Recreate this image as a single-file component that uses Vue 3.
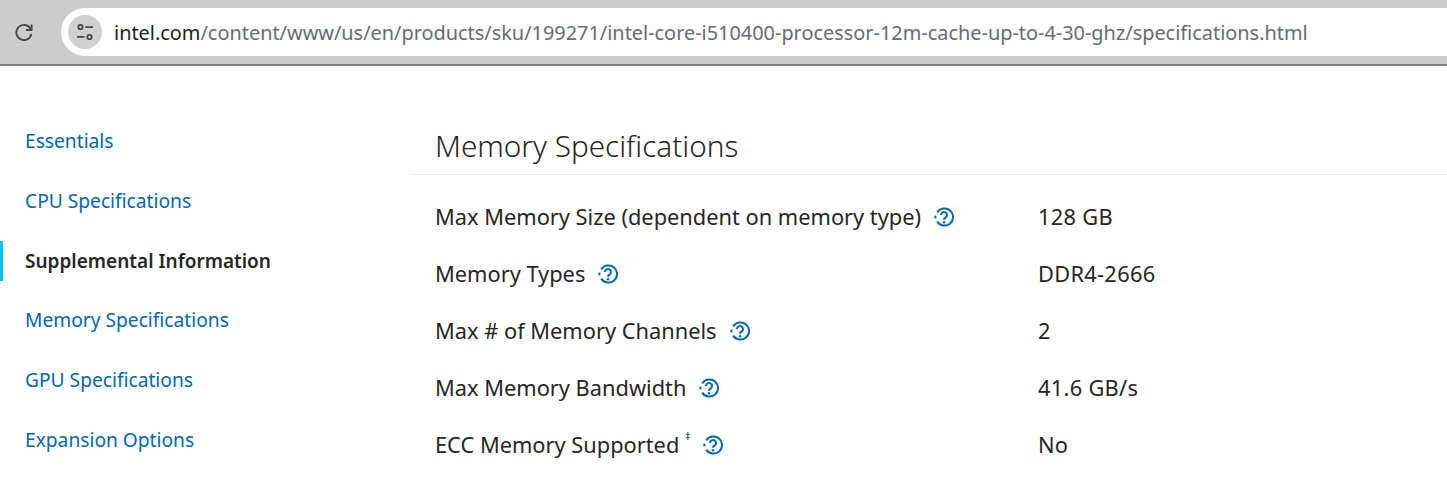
<template>
  <div class="page">
    <header class="toolbar">
      <svg class="reload" viewBox="0 0 20 20" width="20" height="20">
        <path d="M16.6 6.8A7.6 7.6 0 1 0 17.4 12" fill="none" stroke="#474747" stroke-width="1.9" />
        <path d="M17.6 2.4V8H12" fill="none" stroke="#474747" stroke-width="1.9" />
      </svg>
      <div class="omnibox">
        <span class="site-btn">
          <svg viewBox="0 0 20 20" width="20" height="20">
            <circle cx="5.5" cy="5" r="2.2" fill="none" stroke="#474747" stroke-width="1.8" />
            <path d="M10.5 5.2H18M2 14.8H9.5" stroke="#474747" stroke-width="1.8" fill="none" />
            <circle cx="14.5" cy="15" r="2.2" fill="none" stroke="#474747" stroke-width="1.8" />
          </svg>
        </span>
        <span class="url"><span class="host">intel.com</span>/content/www/us/en/products/sku/199271/intel-core-i510400-processor-12m-cache-up-to-4-30-ghz/specifications.html</span>
      </div>
    </header>

    <div class="content">
      <nav class="sidebar">
        <a
          v-for="item in navItems"
          :key="item"
          class="nav-item"
          :class="{ active: item === activeItem }"
        >{{ item }}</a>
      </nav>

      <main class="specs">
        <h2 class="specs-title">Memory Specifications</h2>
        <div class="spec-list">
          <div v-for="row in rows" :key="row.label" class="spec-row">
            <div class="spec-label">
              <span>{{ row.label }}</span>
              <sup v-if="row.note" class="note">‡</sup>
              <svg class="help" viewBox="0 0 20 20" width="20" height="20">
                <path d="M3.2 5.4A8.6 8.6 0 1 1 3.2 14.6" fill="none" stroke="#0068b5" stroke-width="2" />
                <path d="M1.4 8.6V11.4" stroke="#0068b5" stroke-width="2" fill="none" />
                <path d="M7 8A3 3 0 1 1 11.7 10.5C10.5 11.1 10 11.6 10 12.8" fill="none" stroke="#0068b5" stroke-width="2" />
                <circle cx="10" cy="15.2" r="1.25" fill="#0068b5" />
              </svg>
            </div>
            <div class="spec-value">{{ row.value }}</div>
          </div>
        </div>
      </main>
    </div>
  </div>
</template>

<script setup>
const activeItem = 'Supplemental Information'

const navItems = [
  'Essentials',
  'CPU Specifications',
  'Supplemental Information',
  'Memory Specifications',
  'GPU Specifications',
  'Expansion Options',
  'Package Specifications'
]

const rows = [
  { label: 'Max Memory Size (dependent on memory type)', value: '128 GB' },
  { label: 'Memory Types', value: 'DDR4-2666' },
  { label: 'Max # of Memory Channels', value: '2' },
  { label: 'Max Memory Bandwidth', value: '41.6 GB/s' },
  { label: 'ECC Memory Supported', value: 'No', note: true }
]
</script>

<style>
html, body {
  margin: 0;
  height: 100%;
  overflow: hidden;
  background: #fff;
}
</style>

<style scoped>
.page {
  height: 492px;
  overflow: hidden;
  font-family: 'Noto Sans', sans-serif;
  color: #262626;
}

.toolbar {
  display: flex;
  align-items: center;
  height: 64px;
  padding-left: 14px;
  background: #cccccc;
  border-bottom: 2px solid #808080;
}

.reload {
  margin-right: 27px;
}

.omnibox {
  flex: 1;
  display: flex;
  align-items: center;
  height: 48px;
  padding-left: 7px;
  background: #fdfdfd;
  border-radius: 24px 0 0 24px;
}

.site-btn {
  display: flex;
  align-items: center;
  justify-content: center;
  width: 34px;
  height: 34px;
  border-radius: 50%;
  background: #d0d0d0;
  margin-right: 12px;
}

.url {
  font-size: 19.9px;
  color: #666d75;
  white-space: nowrap;
}

.host {
  color: #1f1f1f;
}

.content {
  display: flex;
  align-items: flex-start;
}

.sidebar {
  width: 413px;
  flex-shrink: 0;
  display: flex;
  flex-direction: column;
  padding-top: 55px;
}

.nav-item {
  height: 40px;
  line-height: 40px;
  margin-bottom: 19.75px;
  padding-left: 25px;
  font-size: 19.2px;
  color: #0068b5;
  white-space: nowrap;
}

.nav-item.active {
  font-size: 19px;
  font-weight: 600;
  color: #262626;
  box-shadow: inset 3px 0 0 #00c7fd;
}

.specs {
  flex: 1;
  min-width: 0;
}

.specs-title {
  margin: 0;
  height: 109px;
  padding: 58px 0 0 22px;
  box-sizing: border-box;
  border-bottom: 1px solid #e9e9e9;
  font-size: 29.7px;
  line-height: 44px;
  font-weight: 300;
  color: #262626;
}

.spec-list {
  padding-top: 13px;
}

.spec-row {
  display: flex;
  align-items: center;
  height: 57px;
  padding-left: 22px;
  font-size: 21.8px;
}

.spec-label {
  width: 603px;
  display: flex;
  align-items: center;
  white-space: nowrap;
}

.note {
  font-size: 10px;
  line-height: 1;
  margin-left: 6px;
  align-self: flex-start;
  margin-top: 1px;
}

.help {
  margin-left: 13px;
  flex-shrink: 0;
}

.spec-value {
  white-space: nowrap;
  letter-spacing: 0.3px;
}
</style>
